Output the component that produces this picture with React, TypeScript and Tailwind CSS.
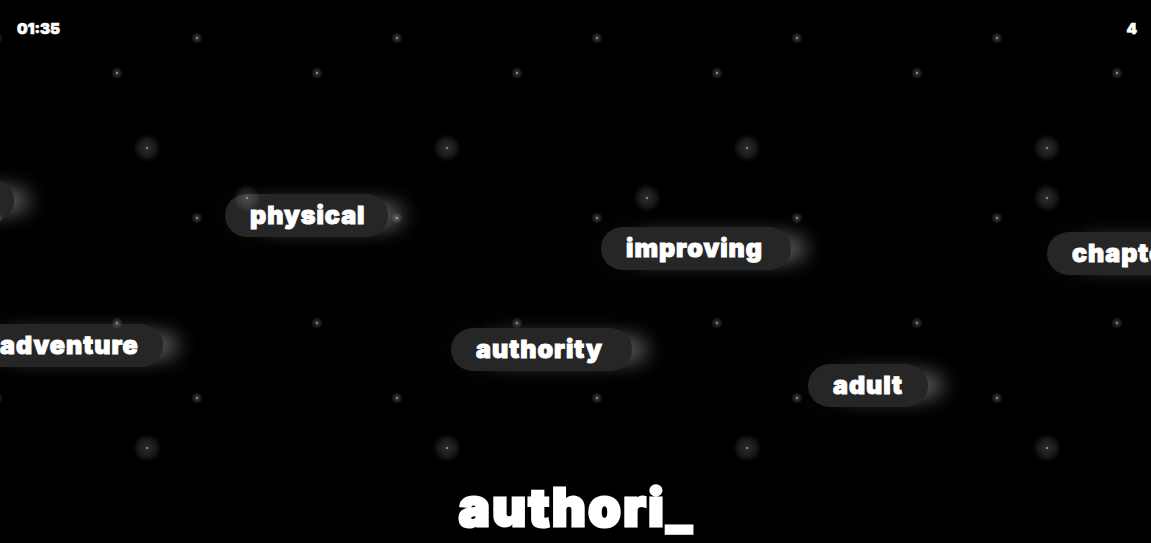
const words = [
  { text: "", left: "left-[-60px]", top: "top-[179px]", width: "w-[74px]" },
  { text: "physical", left: "left-[225px]", top: "top-[194px]", width: "w-[163px]" },
  { text: "improving", left: "left-[601px]", top: "top-[227px]", width: "w-[190px]" },
  { text: "chapter", left: "left-[1047px]", top: "top-[232px]", width: "w-[170px]" },
  { text: "adventure", left: "left-[-25px]", top: "top-[324px]", width: "w-[188px]" },
  { text: "authority", left: "left-[451px]", top: "top-[328px]", width: "w-[181px]" },
  { text: "adult", left: "left-[808px]", top: "top-[364px]", width: "w-[120px]" },
];

const font = "font-['Inter','Liberation_Sans',sans-serif] font-black";

function Starfield() {
  return (
    <>
      <div className="absolute inset-0 bg-[radial-gradient(circle,#808080_0,#808080_1px,rgba(255,255,255,0.2)_1.5px,rgba(255,255,255,0.09)_4px,transparent_6px)] bg-size-[200px_180px] bg-position-[97px_-52px]" />
      <div className="absolute inset-0 bg-[radial-gradient(circle,#808080_0,#808080_1px,rgba(255,255,255,0.2)_1.5px,rgba(255,255,255,0.09)_4px,transparent_6px)] bg-size-[200px_250px] bg-position-[17px_-52px]" />
      <div className="absolute inset-0 bg-[radial-gradient(circle,#808080_0,#808080_1px,rgba(255,255,255,0.17)_1.5px,rgba(255,255,255,0.09)_9px,transparent_14px)] bg-size-[300px_300px] bg-position-[-3px_-2px]" />
      <div className="absolute inset-0 bg-[radial-gradient(circle,#808080_0,#808080_1px,rgba(255,255,255,0.17)_1.5px,rgba(255,255,255,0.09)_9px,transparent_14px)] bg-size-[400px_400px] bg-position-[47px_-2px]" />
    </>
  );
}

export default function App() {
  return (
    <div className={`relative flex h-[543px] w-full flex-col justify-between overflow-hidden bg-black text-white ${font}`}>
      <Starfield />
      <div className="relative flex justify-between pl-[17px] pr-[14px] pt-5 text-[15px] leading-[18px] [-webkit-text-stroke:0.6px_white]">
        <span>01:35</span>
        <span>4</span>
      </div>
      {words.map((w) => (
        <div
          key={w.text || "cut"}
          className={`absolute ${w.left} ${w.top} ${w.width} flex h-[43px] items-center whitespace-nowrap rounded-full bg-white/15 pl-[25px] pt-px text-[25px] tracking-[1px] [-webkit-text-stroke:1px_white] shadow-[24px_0_20px_-9px_rgba(255,255,255,0.36),0_0_30px_rgba(255,255,255,0.04)]`}
        >
          {w.text}
        </div>
      ))}
      <div className="relative pb-px pl-[2px] text-center text-[52px] leading-[68px] tracking-[2.5px] [-webkit-text-stroke:3px_white]">authori_</div>
    </div>
  );
}
